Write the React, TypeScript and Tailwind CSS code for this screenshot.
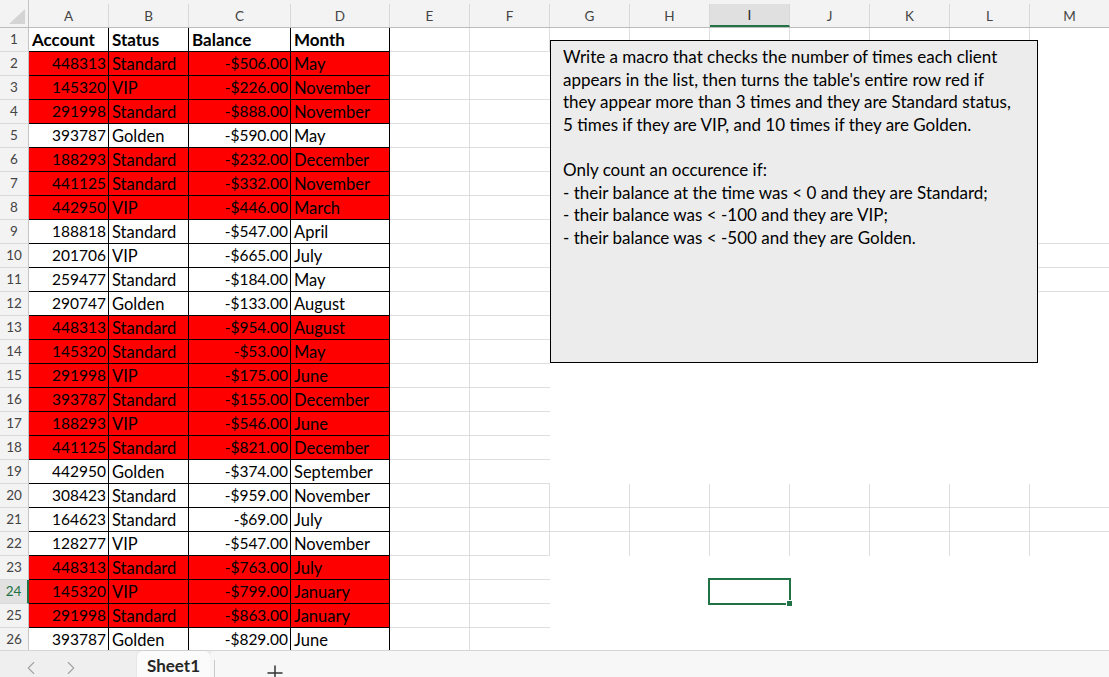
import { ChevronLeft, ChevronRight, Plus } from 'lucide-react';
import clsx from 'clsx';

type Row = { acct: string; status: string; bal: string; month: string; red?: boolean };

const rows: Row[] = [
  { acct: '448313', status: 'Standard', bal: '-$506.00', month: 'May', red: true },
  { acct: '145320', status: 'VIP', bal: '-$226.00', month: 'November', red: true },
  { acct: '291998', status: 'Standard', bal: '-$888.00', month: 'November', red: true },
  { acct: '393787', status: 'Golden', bal: '-$590.00', month: 'May' },
  { acct: '188293', status: 'Standard', bal: '-$232.00', month: 'December', red: true },
  { acct: '441125', status: 'Standard', bal: '-$332.00', month: 'November', red: true },
  { acct: '442950', status: 'VIP', bal: '-$446.00', month: 'March', red: true },
  { acct: '188818', status: 'Standard', bal: '-$547.00', month: 'April' },
  { acct: '201706', status: 'VIP', bal: '-$665.00', month: 'July' },
  { acct: '259477', status: 'Standard', bal: '-$184.00', month: 'May' },
  { acct: '290747', status: 'Golden', bal: '-$133.00', month: 'August' },
  { acct: '448313', status: 'Standard', bal: '-$954.00', month: 'August', red: true },
  { acct: '145320', status: 'Standard', bal: '-$53.00', month: 'May', red: true },
  { acct: '291998', status: 'VIP', bal: '-$175.00', month: 'June', red: true },
  { acct: '393787', status: 'Standard', bal: '-$155.00', month: 'December', red: true },
  { acct: '188293', status: 'VIP', bal: '-$546.00', month: 'June', red: true },
  { acct: '441125', status: 'Standard', bal: '-$821.00', month: 'December', red: true },
  { acct: '442950', status: 'Golden', bal: '-$374.00', month: 'September' },
  { acct: '308423', status: 'Standard', bal: '-$959.00', month: 'November' },
  { acct: '164623', status: 'Standard', bal: '-$69.00', month: 'July' },
  { acct: '128277', status: 'VIP', bal: '-$547.00', month: 'November' },
  { acct: '448313', status: 'Standard', bal: '-$763.00', month: 'July', red: true },
  { acct: '145320', status: 'VIP', bal: '-$799.00', month: 'January', red: true },
  { acct: '291998', status: 'Standard', bal: '-$863.00', month: 'January', red: true },
  { acct: '393787', status: 'Golden', bal: '-$829.00', month: 'June' },
];

const headers = [
  { l: 'A', w: 'w-[80px]' },
  { l: 'B', w: 'w-[80px]' },
  { l: 'C', w: 'w-[102px]' },
  { l: 'D', w: 'w-[99px]' },
  ...['E', 'F', 'G', 'H', 'I', 'J', 'K', 'L', 'M'].map(l => ({ l, w: 'w-[80px]' })),
];

// the empty cells right of the table; the screenshot only shows gridlines in patches
function EmptyCells({ r }: { r: number }) {
  const full = r === 1 || (r >= 20 && r <= 22);
  return (
    <>
      {['E', 'F', 'G', 'H', 'I', 'J', 'K', 'L', 'M'].map((c, i) => {
        const right = i === 0 || full;
        const bottom = i < 2 || r === 20 || r === 21 || (i >= 7 && r >= 9 && r <= 11);
        return (
          <div
            key={c}
            className={clsx('h-full w-[80px] shrink-0 border-[#dedede]', right && 'border-r', bottom && 'border-b')}
          />
        );
      })}
    </>
  );
}

function RowLabel({ n }: { n: number }) {
  const sel = n === 24;
  return (
    <div
      className={clsx(
        'flex h-full w-[29px] shrink-0 items-center justify-center border-b border-b-[#dadada] text-[13.5px]',
        sel ? 'border-r-2 border-r-[#217346] bg-[#e1e1e1] text-[#217346]' : 'border-r border-r-[#c4c4c4] bg-[#f3f3f3] text-[#444]'
      )}
    >
      {n}
    </div>
  );
}

function Cell({ w, red, right, bold, children }: { w: string; red?: boolean; right?: boolean; bold?: boolean; children: React.ReactNode }) {
  return (
    <div
      className={clsx(
        'flex h-full shrink-0 items-center overflow-hidden whitespace-nowrap border-r border-b border-black px-[3px] pt-[1px]',
        w,
        red ? 'bg-[#ff0000]' : 'bg-white',
        right ? 'justify-end pr-[2px] text-[15.5px]' : 'justify-start',
        bold && 'text-[17px] font-bold'
      )}
    >
      {children}
    </div>
  );
}

export default function App() {
  return (
    <div className="h-[677px] w-[1109px] overflow-hidden bg-white font-[Lato,sans-serif] text-[16.5px] text-black">
      <div className="relative h-[650px] overflow-hidden">
        {/* column headers */}
        <div className="flex h-[28px] border-b border-[#bcbcbc] bg-[#f3f3f3]">
          <div className="flex w-[29px] shrink-0 items-end justify-end border-r border-[#c4c4c4] pr-[3px] pb-[3px]">
            <svg width="16" height="15" viewBox="0 0 16 15">
              <polygon points="16,0 16,15 0,15" fill="#d4d4d4" />
            </svg>
          </div>
          {headers.map(h => (
            <div
              key={h.l}
              className={clsx(
                'mt-[4px] flex shrink-0 items-center justify-center border-r border-[#d8d8d8] pt-[1px] text-[13.5px]',
                h.w,
                h.l === 'I' ? 'border-b-2 border-b-[#217346] bg-[#e0e0e0] text-[#262626]' : 'text-[#444]'
              )}
            >
              {h.l}
            </div>
          ))}
        </div>

        {/* row 1 */}
        <div className="flex h-[24px]">
          <RowLabel n={1} />
          <Cell w="w-[80px]" bold>Account</Cell>
          <Cell w="w-[80px]" bold>Status</Cell>
          <Cell w="w-[102px]" bold>Balance</Cell>
          <Cell w="w-[99px]" bold>Month</Cell>
          <EmptyCells r={1} />
        </div>

        {rows.map((row, i) => (
          <div key={i} className="flex h-[24px]">
            <RowLabel n={i + 2} />
            <Cell w="w-[80px]" red={row.red} right>{row.acct}</Cell>
            <Cell w="w-[80px]" red={row.red}>{row.status}</Cell>
            <Cell w="w-[102px]" red={row.red} right>{row.bal}</Cell>
            <Cell w="w-[99px]" red={row.red}>{row.month}</Cell>
            <EmptyCells r={i + 2} />
          </div>
        ))}

        {/* text box shape */}
        <div className="absolute top-[40px] left-[550px] h-[323px] w-[488px] border border-black bg-[#ececec] px-[12px] pt-[5px] text-[17px] leading-[22.6px] whitespace-nowrap">
          <p>
            Write a macro that checks the number of times each client
            <br />
            appears in the list, then turns the table's entire row red if
            <br />
            they appear more than 3 times and they are Standard status,
            <br />
            5 times if they are VIP, and 10 times if they are Golden.
          </p>
          <p className="mt-[22.6px]">Only count an occurence if:</p>
          <p>- their balance at the time was &lt; 0 and they are Standard;</p>
          <p>- their balance was &lt; -100 and they are VIP;</p>
          <p>- their balance was &lt; -500 and they are Golden.</p>
        </div>

        {/* active cell I24 */}
        <div className="absolute top-[578px] left-[708px] h-[27px] w-[83px] border-2 border-[#217346]" />
        <div className="absolute top-[600px] left-[786px] h-[7px] w-[7px] border border-white bg-[#217346]" />
      </div>

      {/* sheet tabs */}
      <div className="flex h-[27px] border-t border-[#d6d6d6] bg-[#efefef]">
        <div className="flex w-[137px] shrink-0 items-start gap-[18px] pt-[6px] pl-[20px] text-[#a3a3a3]">
          <ChevronLeft size={22} strokeWidth={1.2} />
          <ChevronRight size={22} strokeWidth={1.2} />
        </div>
        <div className="flex w-[73px] shrink-0 items-center rounded-t-[5px] bg-[#fbfbfb] pt-[3px] pl-[10px] text-[17px] font-bold text-[#262626] shadow-[0_0_2px_rgba(0,0,0,0.12)]">
          Sheet1
        </div>
        <div className="flex flex-1 items-start rounded-tl-[5px] bg-[#f7f7f7]">
          <div className="mt-[9px] ml-[4px] h-[18px] w-px bg-[#c8c8c8]" />
          <Plus size={24} strokeWidth={1.5} className="mt-[10px] ml-[48px] text-[#333]" />
        </div>
      </div>
    </div>
  );
}
